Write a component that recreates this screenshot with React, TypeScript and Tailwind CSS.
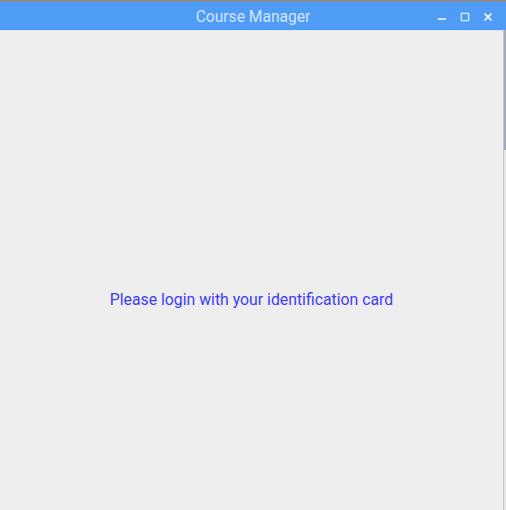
import { Minus, Square, X } from 'lucide-react';

const App = () => {
  return (
    <div className="w-[506px] h-[510px] flex flex-col bg-[#eeeeee] overflow-hidden" style={{ fontFamily: 'Roboto, "Liberation Sans", sans-serif' }}>
      <div className="h-[2px] bg-[#868b96]" />
      <div className="h-[28px] bg-[#4f9cf6] relative flex items-center justify-center">
        <span className="text-[15.6px] text-[#d3e5fd] leading-none mt-[3px]">Course Manager</span>
        <div className="absolute right-[12px] top-0 h-full flex items-center gap-[12px] text-white">
          <Minus size={12} strokeWidth={3} className="mt-[5px]" />
          <Square size={10} strokeWidth={2.5} className="mt-[1px]" />
          <X size={12} strokeWidth={3.5} className="mt-[1px]" />
        </div>
      </div>
      <div className="flex flex-1">
        <div className="flex-1 flex flex-col items-center border-t border-[#dfe9f5] pt-[257px]">
          <p className="text-[15.8px] text-[#3d3df4]">Please login with your identification card</p>
        </div>
        <div className="w-[3px] flex flex-col border-l border-[#c8c8c8]">
          <div className="h-[120px] bg-[#a2aabb]" />
          <div className="flex-1 bg-[#e6e6e6]" />
        </div>
      </div>
    </div>
  );
};

export default App;
